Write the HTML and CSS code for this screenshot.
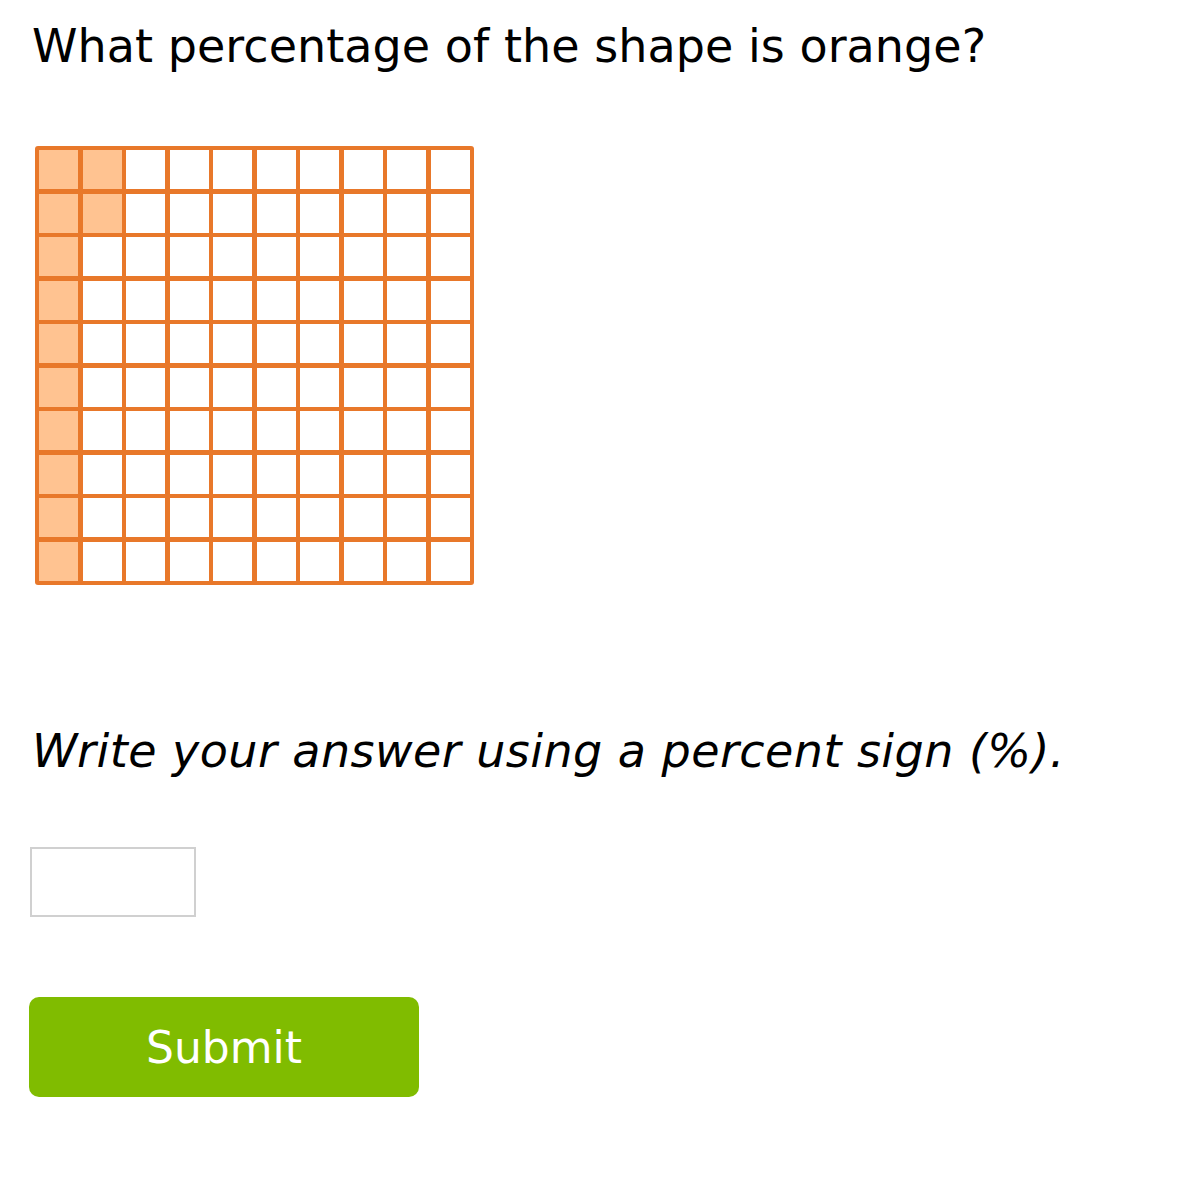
FILE: index.html
```html
<!DOCTYPE html>
<html>
<head>
<meta charset="utf-8">
<link rel="stylesheet" href="styles.css">
</head>
<body>
<div class="page">
  <h1 class="question">What percentage of the shape is orange?</h1>
  <div class="grid">
    <div class="cell on"></div><div class="cell on"></div><div class="cell"></div><div class="cell"></div><div class="cell"></div><div class="cell"></div><div class="cell"></div><div class="cell"></div><div class="cell"></div><div class="cell"></div>
    <div class="cell on"></div><div class="cell on"></div><div class="cell"></div><div class="cell"></div><div class="cell"></div><div class="cell"></div><div class="cell"></div><div class="cell"></div><div class="cell"></div><div class="cell"></div>
    <div class="cell on"></div><div class="cell"></div><div class="cell"></div><div class="cell"></div><div class="cell"></div><div class="cell"></div><div class="cell"></div><div class="cell"></div><div class="cell"></div><div class="cell"></div>
    <div class="cell on"></div><div class="cell"></div><div class="cell"></div><div class="cell"></div><div class="cell"></div><div class="cell"></div><div class="cell"></div><div class="cell"></div><div class="cell"></div><div class="cell"></div>
    <div class="cell on"></div><div class="cell"></div><div class="cell"></div><div class="cell"></div><div class="cell"></div><div class="cell"></div><div class="cell"></div><div class="cell"></div><div class="cell"></div><div class="cell"></div>
    <div class="cell on"></div><div class="cell"></div><div class="cell"></div><div class="cell"></div><div class="cell"></div><div class="cell"></div><div class="cell"></div><div class="cell"></div><div class="cell"></div><div class="cell"></div>
    <div class="cell on"></div><div class="cell"></div><div class="cell"></div><div class="cell"></div><div class="cell"></div><div class="cell"></div><div class="cell"></div><div class="cell"></div><div class="cell"></div><div class="cell"></div>
    <div class="cell on"></div><div class="cell"></div><div class="cell"></div><div class="cell"></div><div class="cell"></div><div class="cell"></div><div class="cell"></div><div class="cell"></div><div class="cell"></div><div class="cell"></div>
    <div class="cell on"></div><div class="cell"></div><div class="cell"></div><div class="cell"></div><div class="cell"></div><div class="cell"></div><div class="cell"></div><div class="cell"></div><div class="cell"></div><div class="cell"></div>
    <div class="cell on"></div><div class="cell"></div><div class="cell"></div><div class="cell"></div><div class="cell"></div><div class="cell"></div><div class="cell"></div><div class="cell"></div><div class="cell"></div><div class="cell"></div>
  </div>
  <p class="instruction">Write your answer using a percent sign (%).</p>
  <input class="answer" type="text" aria-label="answer">
  <button class="submit" type="button">Submit</button>
</div>
</body>
</html>
```

FILE: styles.css
```css
html, body {
  margin: 0;
  padding: 0;
  background: #ffffff;
}

.page {
  display: flex;
  flex-direction: column;
  align-items: flex-start;
  padding: 18px 0 0 30px;
  font-family: "DejaVu Sans", Verdana, sans-serif;
  color: #000000;
}

.question {
  margin: 0 0 0 2px;
  font-size: 46px;
  font-weight: normal;
  line-height: 56px;
  letter-spacing: 0.05px;
}

.grid {
  margin: 72px 0 0 5px;
  width: 439px;
  height: 439px;
  box-sizing: border-box;
  display: grid;
  grid-template-columns: repeat(10, 1fr);
  grid-template-rows: repeat(10, 1fr);
  gap: 4.5px;
  padding: 4px;
  background: #e8782a;
  border-radius: 3px;
}

.cell {
  background: #ffffff;
}

.cell.on {
  background: #ffc391;
}

.instruction {
  margin: 138px 0 0 2px;
  font-size: 46px;
  font-style: italic;
  line-height: 56px;
  letter-spacing: 0.45px;
}

.answer {
  margin: 68px 0 0 0;
  width: 166px;
  height: 70px;
  box-sizing: border-box;
  border: 2px solid #d0d0d0;
  background: #ffffff;
  padding: 0;
  outline: none;
}

.submit {
  margin: 80px 0 0 -1px;
  width: 390px;
  height: 100px;
  border: none;
  border-radius: 10px;
  background: #80bc00;
  color: #ffffff;
  font-family: "DejaVu Sans", Verdana, sans-serif;
  font-size: 44px;
  padding: 0;
}
```
